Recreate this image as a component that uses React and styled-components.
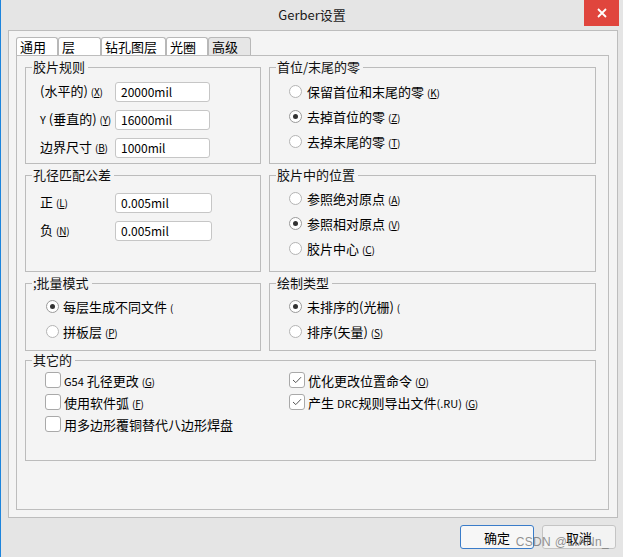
import React from "react";
import styled, { createGlobalStyle } from "styled-components";

const Global = createGlobalStyle`
  html, body { margin: 0; padding: 0; }
  body { width: 623px; height: 557px; overflow: hidden; background: #e5e5e5; }
  * { box-sizing: border-box; }
`;

const FONT = `"Noto Sans CJK SC", "Noto Sans", sans-serif`;

const Window = styled.div`
  position: relative;
  width: 623px;
  height: 557px;
  background: #e5e5e5;
  border-left: 1px solid #1d84dc;
  font-family: ${FONT};
  font-size: 13px;
  color: #000;
  display: flex;
  flex-direction: column;
`;

const TitleBar = styled.div`
  height: 30px;
  display: grid;
  grid-template-columns: 1fr auto 1fr;
  align-items: start;
`;

const Title = styled.div`
  grid-column: 2;
  line-height: 30px;
  font-size: 13px;
  color: #1a1a1a;
`;

const Close = styled.div`
  grid-column: 3;
  justify-self: end;
  margin-right: 4px;
  width: 35px;
  height: 26px;
  background: #e0453d;
  display: flex;
  align-items: center;
  justify-content: center;
`;

const Frame = styled.div`
  margin-left: 7px;
  width: 610px;
  height: 488px;
  border: 1px solid #bdbdbd;
  background: #f4f4f4;
  padding: 6px 0 0 7px;
`;

const TabStrip = styled.div`
  display: flex;
  height: 18px;
`;

const Tab = styled.div`
  width: ${(p) => p.$w}px;
  height: 18px;
  border: 1px solid #b8b8b8;
  border-bottom: none;
  border-radius: 3px 3px 0 0;
  background: ${(p) => (p.$active ? "#e6e6e6" : "#ffffff")};
  padding-left: 3px;
  line-height: 17px;
  font-size: 13px;
  white-space: nowrap;
`;

const TabPage = styled.div`
  width: 593px;
  height: 455px;
  border: 1px solid #bdbdbd;
  background: #f4f4f4;
  padding: 11px 0 0 8px;
  display: flex;
  flex-direction: column;
`;

const Row = styled.div`
  display: grid;
  grid-template-columns: 236px 327px;
  column-gap: 8px;
  margin-top: ${(p) => p.$mt || 0}px;
`;

const Group = styled.div`
  position: relative;
  height: ${(p) => p.$h}px;
  width: ${(p) => (p.$w ? p.$w + "px" : "auto")};
  margin-top: ${(p) => p.$mt || 0}px;
  border: 1px solid #bcbcbc;
  padding: ${(p) => p.$pt}px 0 0 ${(p) => p.$pl}px;
`;

const Legend = styled.div`
  position: absolute;
  top: -10px;
  left: 6px;
  padding: 0 3px 0 1px;
  background: #f4f4f4;
  line-height: 18px;
  font-size: 13px;
  color: #111;
`;

const FieldGrid = styled.div`
  display: grid;
  grid-template-columns: 75px ${(p) => p.$iw}px;
  row-gap: 7px;
  align-items: center;
`;

const FieldLabel = styled.div`
  font-size: 13px;
  white-space: nowrap;
  line-height: 20px;
`;

const Input = styled.div`
  height: 20px;
  background: #fff;
  border: 1px solid #c6c6c6;
  border-radius: 3px;
  padding-left: 5px;
  font-size: 12px;
  line-height: 18px;
`;

const Key = styled.span`
  font-size: 10px;
  margin-left: 3px;
  letter-spacing: -0.2px;
  & u { text-decoration: underline; text-underline-offset: 1px; }
`;

const Small = styled.span`
  font-size: 11px;
`;

const OptionRow = styled.div`
  display: flex;
  align-items: center;
  height: ${(p) => p.$h || 25}px;
  gap: ${(p) => p.$gap || 5}px;
  white-space: nowrap;
  font-size: 13px;
`;

const Radio = styled.span`
  position: relative;
  flex: none;
  width: 13px;
  height: 13px;
  border-radius: 50%;
  border: 1px solid ${(p) => (p.$on ? "#9a9a9a" : "#b4b4b4")};
  background: #fff;
  &::after {
    content: "";
    display: ${(p) => (p.$on ? "block" : "none")};
    position: absolute;
    left: 3px;
    top: 3px;
    width: 5px;
    height: 5px;
    border-radius: 50%;
    background: #333;
  }
`;

const CheckGrid = styled.div`
  display: grid;
  grid-template-columns: 244px auto;
  grid-auto-rows: 22px;
`;

const Box = styled.span`
  flex: none;
  width: 16px;
  height: 16px;
  border: 1px solid #a9a9a9;
  border-radius: 3px;
  background: #fff;
  display: flex;
  align-items: center;
  justify-content: center;
`;

const Footer = styled.div`
  display: flex;
  justify-content: flex-end;
  gap: 8px;
  margin-top: 7px;
  padding-right: 7px;
`;

const Button = styled.div`
  width: 74px;
  height: 24px;
  border-radius: 3px;
  border: 1px solid ${(p) => (p.$primary ? "#3a7cc9" : "#c4c4c4")};
  background: ${(p) => (p.$primary ? "#f7f7f7" : "#f3f3f3")};
  display: flex;
  align-items: center;
  justify-content: center;
  font-size: 13px;
`;

const Watermark = styled.div`
  position: absolute;
  right: 14px;
  bottom: 8px;
  font-family: "Liberation Sans", Arial, sans-serif;
  font-size: 12px;
  color: rgba(110, 110, 110, 0.75);
  letter-spacing: 0.3px;
`;

const K = ({ k }) => (
  <Key>
    (<u>{k}</u>)
  </Key>
);

const RadioOpt = ({ on, children, gap }) => (
  <OptionRow $gap={gap}>
    <Radio $on={on} />
    <span>{children}</span>
  </OptionRow>
);

const Check = () => (
  <svg width="10" height="8" viewBox="0 0 10 8">
    <path d="M1 4 L3.8 6.6 L9 1.2" fill="none" stroke="#555" strokeWidth="1" />
  </svg>
);

const CheckOpt = ({ on, children }) => (
  <OptionRow $h={22} $gap={3}>
    <Box>{on && <Check />}</Box>
    <span>{children}</span>
  </OptionRow>
);

const tabs = [
  { t: "通用", w: 42 },
  { t: "层", w: 43 },
  { t: "钻孔图层", w: 65 },
  { t: "光圈", w: 42 },
  { t: "高级", w: 43, active: true },
];

export default function App() {
  return (
    <>
      <Global />
      <Window>
        <TitleBar>
          <Title>Gerber设置</Title>
          <Close>
            <svg width="10" height="10" viewBox="0 0 10 10">
              <path d="M1 1 L9 9 M9 1 L1 9" stroke="#fff" strokeWidth="1.8" />
            </svg>
          </Close>
        </TitleBar>
        <Frame>
          <TabStrip>
            {tabs.map((t) => (
              <Tab key={t.t} $w={t.w} $active={t.active}>
                {t.t}
              </Tab>
            ))}
          </TabStrip>
          <TabPage>
            <Row>
              <Group $h={97} $pt={13} $pl={14}>
                <Legend>胶片规则</Legend>
                <FieldGrid $iw={95}>
                  <FieldLabel>
                    (水平的)<K k="X" />
                  </FieldLabel>
                  <Input>20000mil</Input>
                  <FieldLabel>
                    <Small>Y</Small> (垂直的)<K k="Y" />
                  </FieldLabel>
                  <Input>16000mil</Input>
                  <FieldLabel>
                    边界尺寸<K k="B" />
                  </FieldLabel>
                  <Input>1000mil</Input>
                </FieldGrid>
              </Group>
              <Group $h={97} $pt={11} $pl={19}>
                <Legend>首位/末尾的零</Legend>
                <RadioOpt>
                  保留首位和末尾的零<K k="K" />
                </RadioOpt>
                <RadioOpt on>
                  去掉首位的零<K k="Z" />
                </RadioOpt>
                <RadioOpt>
                  去掉末尾的零<K k="T" />
                </RadioOpt>
              </Group>
            </Row>
            <Row $mt={11}>
              <Group $h={97} $pt={16} $pl={14}>
                <Legend>孔径匹配公差</Legend>
                <FieldGrid $iw={97}>
                  <FieldLabel>
                    正<K k="L" />
                  </FieldLabel>
                  <Input>0.005mil</Input>
                  <FieldLabel>
                    负<K k="N" />
                  </FieldLabel>
                  <Input>0.005mil</Input>
                </FieldGrid>
              </Group>
              <Group $h={97} $pt={10} $pl={19}>
                <Legend>胶片中的位置</Legend>
                <RadioOpt>
                  参照绝对原点<K k="A" />
                </RadioOpt>
                <RadioOpt on>
                  参照相对原点<K k="V" />
                </RadioOpt>
                <RadioOpt>
                  胶片中心<K k="C" />
                </RadioOpt>
              </Group>
            </Row>
            <Row $mt={11}>
              <Group $h={68} $pt={10} $pl={20}>
                <Legend>;批量模式</Legend>
                <RadioOpt on gap={4}>
                  每层生成不同文件<Key>(</Key>
                </RadioOpt>
                <RadioOpt gap={4}>
                  拼板层<K k="P" />
                </RadioOpt>
              </Group>
              <Group $h={68} $pt={10} $pl={19}>
                <Legend>绘制类型</Legend>
                <RadioOpt on>
                  未排序的(光栅)<Key>(</Key>
                </RadioOpt>
                <RadioOpt>
                  排序(矢量)<K k="S" />
                </RadioOpt>
              </Group>
            </Row>
            <Group $h={101} $w={571} $mt={9} $pt={8} $pl={19}>
              <Legend>其它的</Legend>
              <CheckGrid>
                <CheckOpt>
                  <Small>G54</Small> 孔径更改<K k="G" />
                </CheckOpt>
                <CheckOpt on>
                  优化更改位置命令<K k="O" />
                </CheckOpt>
                <CheckOpt>
                  使用软件弧<K k="F" />
                </CheckOpt>
                <CheckOpt on>
                  产生 <Small>DRC</Small>规则导出文件<Small>(.RU)</Small>
                  <K k="G" />
                </CheckOpt>
                <CheckOpt>用多边形覆铜替代八边形焊盘</CheckOpt>
              </CheckGrid>
            </Group>
          </TabPage>
        </Frame>
        <Footer>
          <Button $primary>确定</Button>
          <Button>取消</Button>
        </Footer>
        <Watermark>CSDN @LIANn_</Watermark>
      </Window>
    </>
  );
}
